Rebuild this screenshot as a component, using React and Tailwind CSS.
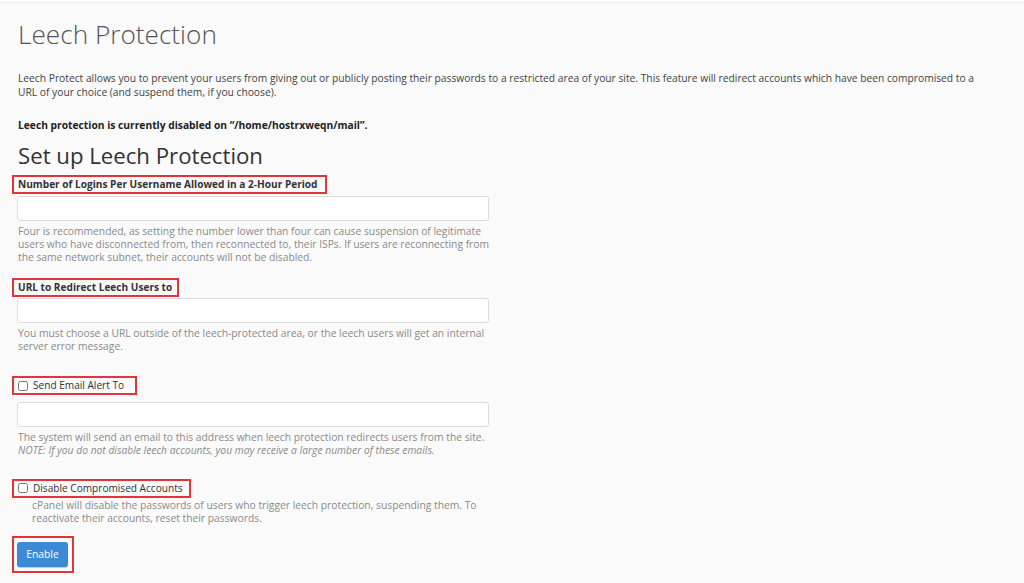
import React from 'react';

const RedBox = ({ children, className = '' }) => (
  <div className={`inline-flex items-center border-2 border-[#e0353b] -ml-[6px] pl-[4px] h-[19px] ${className}`}>
    {children}
  </div>
);

const Field = () => (
  <input
    type="text"
    className="block -ml-px w-[472px] h-[25px] bg-white border border-[#dcdcdc] rounded-[3px] outline-none"
  />
);

const Help = ({ children, className = '' }) => (
  <p className={`text-[10.3px] leading-[13px] text-[#8a8a8a] ${className}`}>{children}</p>
);

export default function App() {
  return (
    <div className="min-h-[583px] bg-[#fafafa] text-[#333] font-['Open_Sans',sans-serif]">
      <div className="h-[3px] bg-white border-b border-[#ececec]" />
      <div className="px-[18px]">
        <h1 className="pt-[14px] text-[26.2px] leading-[34px] font-light text-[#555]">Leech Protection</h1>

        <p className="mt-[20px] w-[975px] text-[10.25px] leading-[14px] text-[#444]">
          Leech Protect allows you to prevent your users from giving out or publicly posting their passwords to a restricted area of your site. This feature will redirect accounts which have been compromised to a URL of your choice (and suspend them, if you choose).
        </p>

        <p className="mt-[19px] text-[10.25px] leading-[14px] font-bold text-[#222]">
          Leech protection is currently disabled on “/home/hostrxweqn/mail”.
        </p>

        <h2 className="mt-[10px] text-[22.2px] leading-[28px] text-[#333]">Set up Leech Protection</h2>

        <RedBox className="mt-[2px] pr-[7px]">
          <span className="text-[10.1px] font-bold text-[#333]">Number of Logins Per Username Allowed in a 2-Hour Period</span>
        </RedBox>
        <div className="mt-[2px]">
          <Field />
        </div>
        <Help className="mt-[4px] w-[472px]">
          Four is recommended, as setting the number lower than four can cause suspension of legitimate users who have disconnected from, then reconnected to, their ISPs. If users are reconnecting from the same network subnet, their accounts will not be disabled.
        </Help>

        <RedBox className="mt-[14px] pr-[5px]">
          <span className="text-[10.1px] font-bold text-[#333]">URL to Redirect Leech Users to</span>
        </RedBox>
        <div className="mt-[1px]">
          <Field />
        </div>
        <Help className="mt-[4px] w-[472px]">
          You must choose a URL outside of the leech-protected area, or the leech users will get an internal server error message.
        </Help>

        <RedBox className="mt-[23px] gap-[5px] pr-[11px]">
          <input type="checkbox" className="w-[10px] h-[10px] m-0" />
          <span className="text-[10.1px] text-[#333]">Send Email Alert To</span>
        </RedBox>
        <div className="mt-[5px]">
          <Field />
        </div>
        <Help className="mt-[4px] w-[500px]">
          The system will send an email to this address when leech protection redirects users from the site.
          <br />
          <em>NOTE: If you do not disable leech accounts, you may receive a large number of these emails.</em>
        </Help>

        <RedBox className="mt-[22px] gap-[5px] pr-[6px]">
          <input type="checkbox" className="w-[10px] h-[10px] m-0" />
          <span className="text-[10.1px] text-[#333]">Disable Compromised Accounts</span>
        </RedBox>
        <Help className="mt-0 ml-[14px] w-[470px]">
          cPanel will disable the passwords of users who trigger leech protection, suspending them. To reactivate their accounts, reset their passwords.
        </Help>

        <div className="mt-[11px] -ml-[6px] inline-flex border-2 border-[#e0353b] pl-[3px] pr-[4px] py-[4px]">
          <button className="h-[25px] w-[51px] bg-[#3a8ad6] rounded-[3px] text-white text-[10.3px] shadow-[0_1px_1px_rgba(0,0,0,0.2)]">
            Enable
          </button>
        </div>
      </div>
    </div>
  );
}
